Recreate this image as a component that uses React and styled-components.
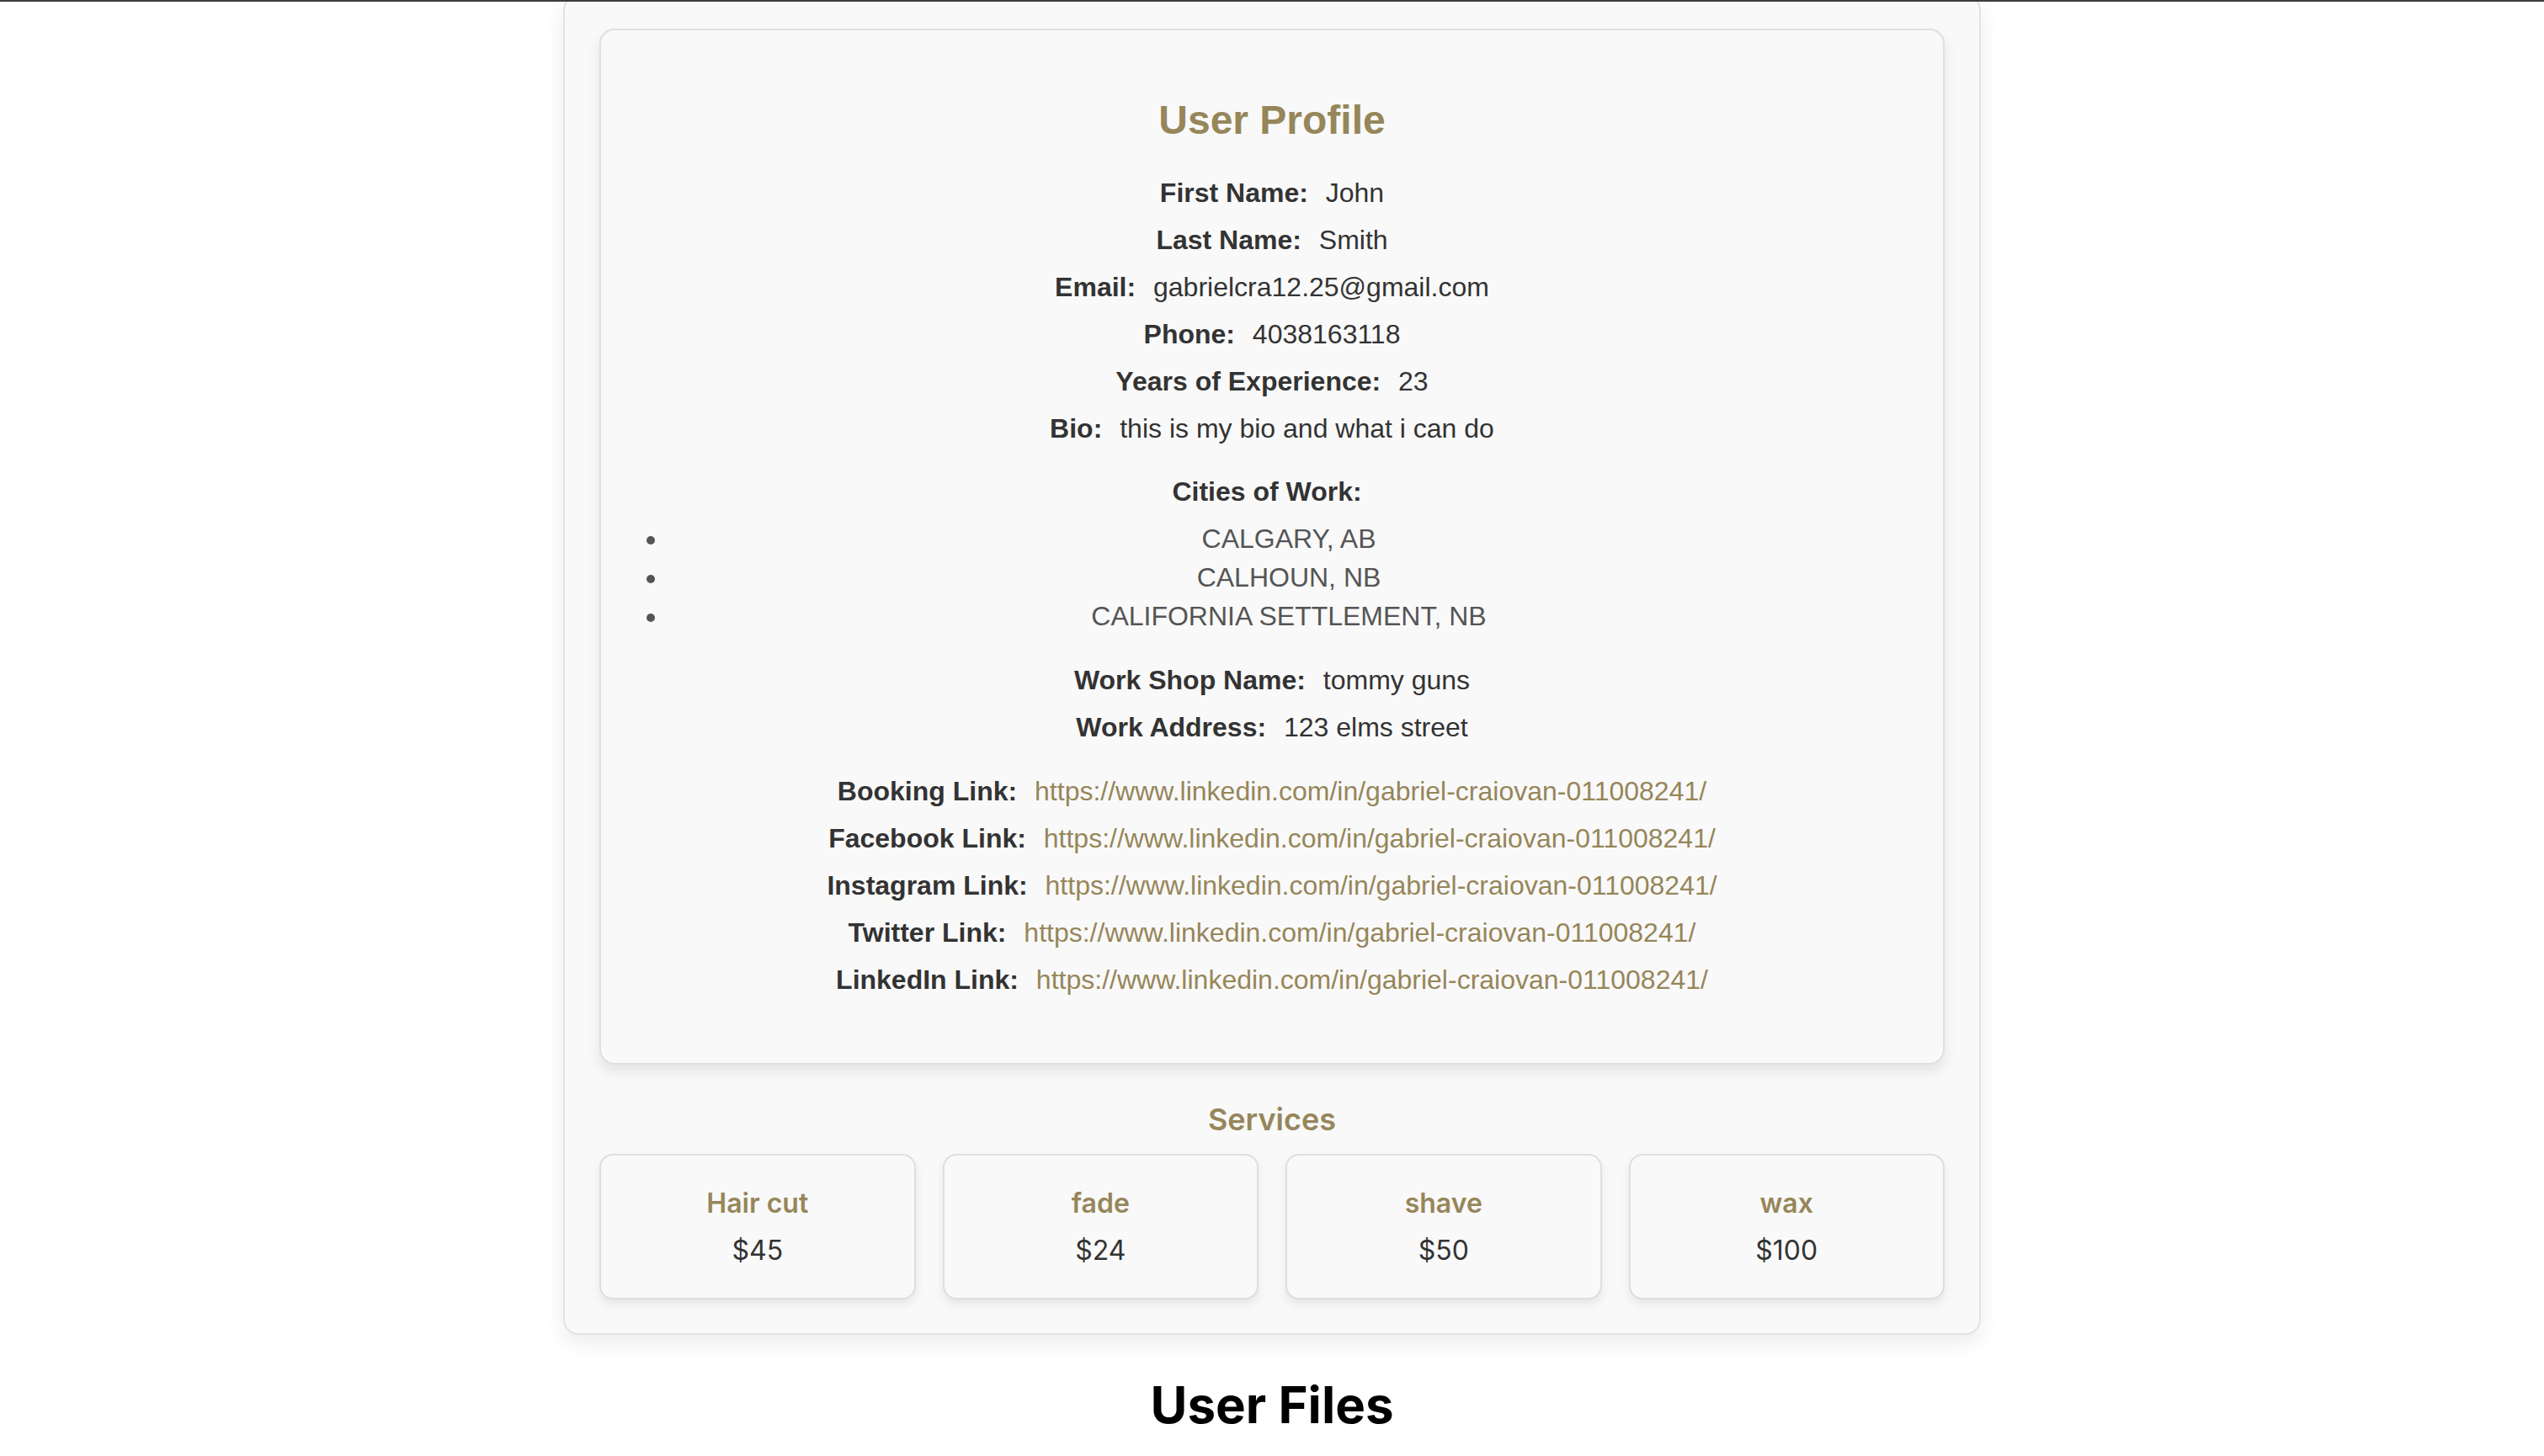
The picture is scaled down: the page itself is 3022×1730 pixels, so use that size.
import React from 'react'
import styled, { createGlobalStyle } from 'styled-components'

const GlobalStyle = createGlobalStyle`
  body {
    margin: 0;
    background: #ffffff;
    font-family: Inter, "Noto Sans", sans-serif;
  }
`

const gold = '#968659'

const TopRule = styled.div`
  position: relative;
  z-index: 1;
  height: 2px;
  background: #3d3d3d;
`

const Shell = styled.div`
  width: 1684px;
  box-sizing: border-box;
  margin: -8px auto 0;
  padding: 38px 41px 40px;
  background: #f9f9f9;
  border: 2px solid #e3e3e3;
  border-radius: 18px;
  box-shadow: 0 10px 24px rgba(0, 0, 0, 0.08);
`

const ProfileCard = styled.div`
  box-sizing: border-box;
  padding: 40px;
  background: #f9f9f9;
  border: 2px solid #e0e0e0;
  border-radius: 18px;
  box-shadow: 0 8px 16px rgba(0, 0, 0, 0.09);
  font-family: "Liberation Sans", Arial, sans-serif;
  color: #333;
`

const Title = styled.h2`
  margin: 39px 0 30px;
  font-size: 48px;
  line-height: 56px;
  font-weight: 700;
  color: ${gold};
  text-align: center;
`

const Section = styled.div`
  margin-top: ${({ $top }) => $top || 0}px;
  margin-bottom: ${({ $bottom }) => $bottom || 0}px;
`

const Row = styled.p`
  margin: 0;
  font-size: 32px;
  line-height: 56px;
  text-align: center;
`

const Label = styled.strong`
  font-weight: 700;
  margin-right: 12px;
`

const Link = styled.a`
  color: ${gold};
  text-decoration: none;
`

const Cities = styled.ul`
  margin: 5px 0 0;
  padding-left: 40px;
  color: #555;
`

const City = styled.li`
  font-size: 32px;
  line-height: 46px;
  text-align: center;
`

const ServicesTitle = styled.h3`
  margin: 43px 0 19px;
  font-size: 36px;
  line-height: 44px;
  font-weight: 600;
  color: ${gold};
  text-align: center;
`

const ServiceGrid = styled.div`
  display: grid;
  grid-template-columns: repeat(4, 1fr);
  gap: 32px;
`

const ServiceCard = styled.div`
  padding: 37px 16px 36px;
  background: #f9f9f9;
  border: 2px solid #dedede;
  border-radius: 16px;
  box-shadow: 0 6px 12px rgba(0, 0, 0, 0.08);
  text-align: center;
`

const ServiceName = styled.div`
  font-size: 32px;
  line-height: 40px;
  font-weight: 600;
  color: ${gold};
  margin-bottom: 16px;
`

const Price = styled.div`
  font-size: 32px;
  line-height: 40px;
  color: #333;
`

const FilesTitle = styled.h1`
  margin: 45px 0 0;
  font-size: 60px;
  line-height: 76px;
  font-weight: 700;
  color: #000;
  text-align: center;
`

const url = 'https://www.linkedin.com/in/gabriel-craiovan-011008241/'

const details = [
  ['First Name:', 'John'],
  ['Last Name:', 'Smith'],
  ['Email:', 'gabrielcra12.25@gmail.com'],
  ['Phone:', '4038163118'],
  ['Years of Experience:', '23'],
  ['Bio:', 'this is my bio and what i can do'],
]

const links = ['Booking Link:', 'Facebook Link:', 'Instagram Link:', 'Twitter Link:', 'LinkedIn Link:']

const services = [
  { name: 'Hair cut', price: '$45' },
  { name: 'fade', price: '$24' },
  { name: 'shave', price: '$50' },
  { name: 'wax', price: '$100' },
]

function App() {
  return (
    <>
      <GlobalStyle />
      <TopRule />
      <Shell>
        <ProfileCard>
          <Title>User Profile</Title>
          <Section>
            {details.map(([label, value]) => (
              <Row key={label}>
                <Label>{label}</Label> {value}
              </Row>
            ))}
          </Section>
          <Section $top={19}>
            <Row>
              <Label>Cities of Work:</Label>
            </Row>
            <Cities>
              <City>CALGARY, AB</City>
              <City>CALHOUN, NB</City>
              <City>CALIFORNIA SETTLEMENT, NB</City>
            </Cities>
          </Section>
          <Section $top={25}>
            <Row>
              <Label>Work Shop Name:</Label> tommy guns
            </Row>
            <Row>
              <Label>Work Address:</Label> 123 elms street
            </Row>
          </Section>
          <Section $top={20} $bottom={31}>
            {links.map((label) => (
              <Row key={label}>
                <Label>{label}</Label> <Link href="#">{url}</Link>
              </Row>
            ))}
          </Section>
        </ProfileCard>
        <ServicesTitle>Services</ServicesTitle>
        <ServiceGrid>
          {services.map((s) => (
            <ServiceCard key={s.name}>
              <ServiceName>{s.name}</ServiceName>
              <Price>{s.price}</Price>
            </ServiceCard>
          ))}
        </ServiceGrid>
      </Shell>
      <FilesTitle>User Files</FilesTitle>
    </>
  )
}

export default App
